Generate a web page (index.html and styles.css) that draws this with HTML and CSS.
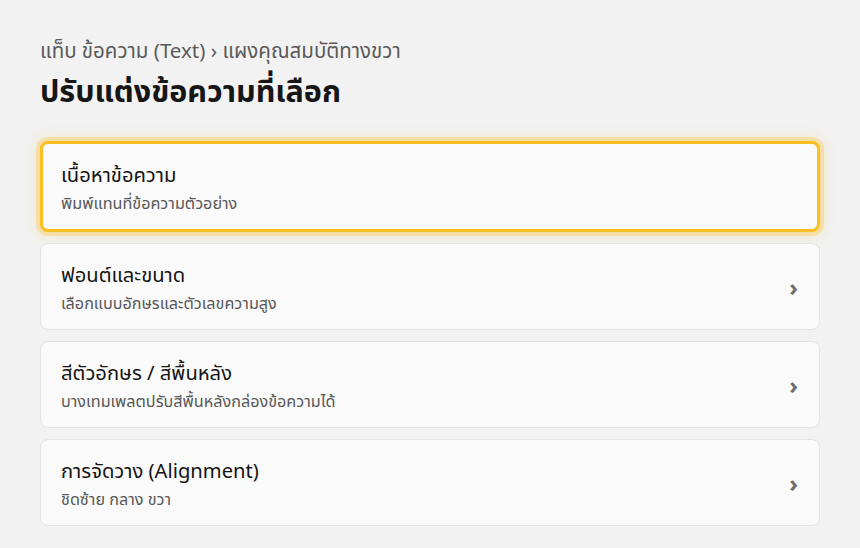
FILE: index.html
```html
<!DOCTYPE html>
<html lang="th">
<head>
<meta charset="utf-8">
<link rel="stylesheet" href="styles.css">
</head>
<body>
<main class="page">
  <div class="crumb">แท็บ ข้อความ (Text) › แผงคุณสมบัติทางขวา</div>
  <h1 class="title">ปรับแต่งข้อความที่เลือก</h1>
  <div class="list">
    <div class="card selected">
      <div class="text">
        <div class="name">เนื้อหาข้อความ</div>
        <div class="desc">พิมพ์แทนที่ข้อความตัวอย่าง</div>
      </div>
    </div>
    <div class="card">
      <div class="text">
        <div class="name">ฟอนต์และขนาด</div>
        <div class="desc">เลือกแบบอักษรและตัวเลขความสูง</div>
      </div>
      <span class="chev">›</span>
    </div>
    <div class="card">
      <div class="text">
        <div class="name">สีตัวอักษร / สีพื้นหลัง</div>
        <div class="desc">บางเทมเพลตปรับสีพื้นหลังกล่องข้อความได้</div>
      </div>
      <span class="chev">›</span>
    </div>
    <div class="card">
      <div class="text">
        <div class="name">การจัดวาง (Alignment)</div>
        <div class="desc">ชิดซ้าย กลาง ขวา</div>
      </div>
      <span class="chev">›</span>
    </div>
  </div>
</main>
</body>
</html>
```
FILE: styles.css
```css
html, body {
  margin: 0;
  padding: 0;
  background: #f2f2f2;
  font-family: "Noto Sans", "Noto Sans Thai", "DejaVu Sans", sans-serif;
}
.page {
  padding: 35px 40px 0 40px;
}
.crumb {
  font-size: 20.5px;
  color: #5a5a5a;
  line-height: 30px;
}
.title {
  margin: 5px 0 0 0;
  font-size: 30.5px;
  font-weight: 700;
  color: #161616;
  line-height: 40px;
}
.list {
  margin-top: 31px;
  display: flex;
  flex-direction: column;
  gap: 11px;
}
.card {
  display: flex;
  align-items: center;
  justify-content: space-between;
  height: 87px;
  box-sizing: border-box;
  padding: 0 20px;
  background: #fafafa;
  border: 1px solid #e3e3e3;
  border-radius: 8px;
}
.card.selected {
  height: 91px;
  border: 3px solid #fbbf24;
  padding: 0 18px;
  box-shadow: 0 0 0 4px rgba(251, 191, 36, 0.3), 0 0 14px 4px rgba(240, 200, 90, 0.25);
}
.name {
  font-size: 20.2px;
  color: #141414;
  line-height: 28px;
}
.desc {
  margin-top: 4px;
  font-size: 16.2px;
  color: #585858;
  line-height: 22px;
}
.chev {
  font-size: 24px;
  font-weight: 700;
  color: #6e6e6e;
  line-height: 24px;
  margin-right: 1px;
}
```
